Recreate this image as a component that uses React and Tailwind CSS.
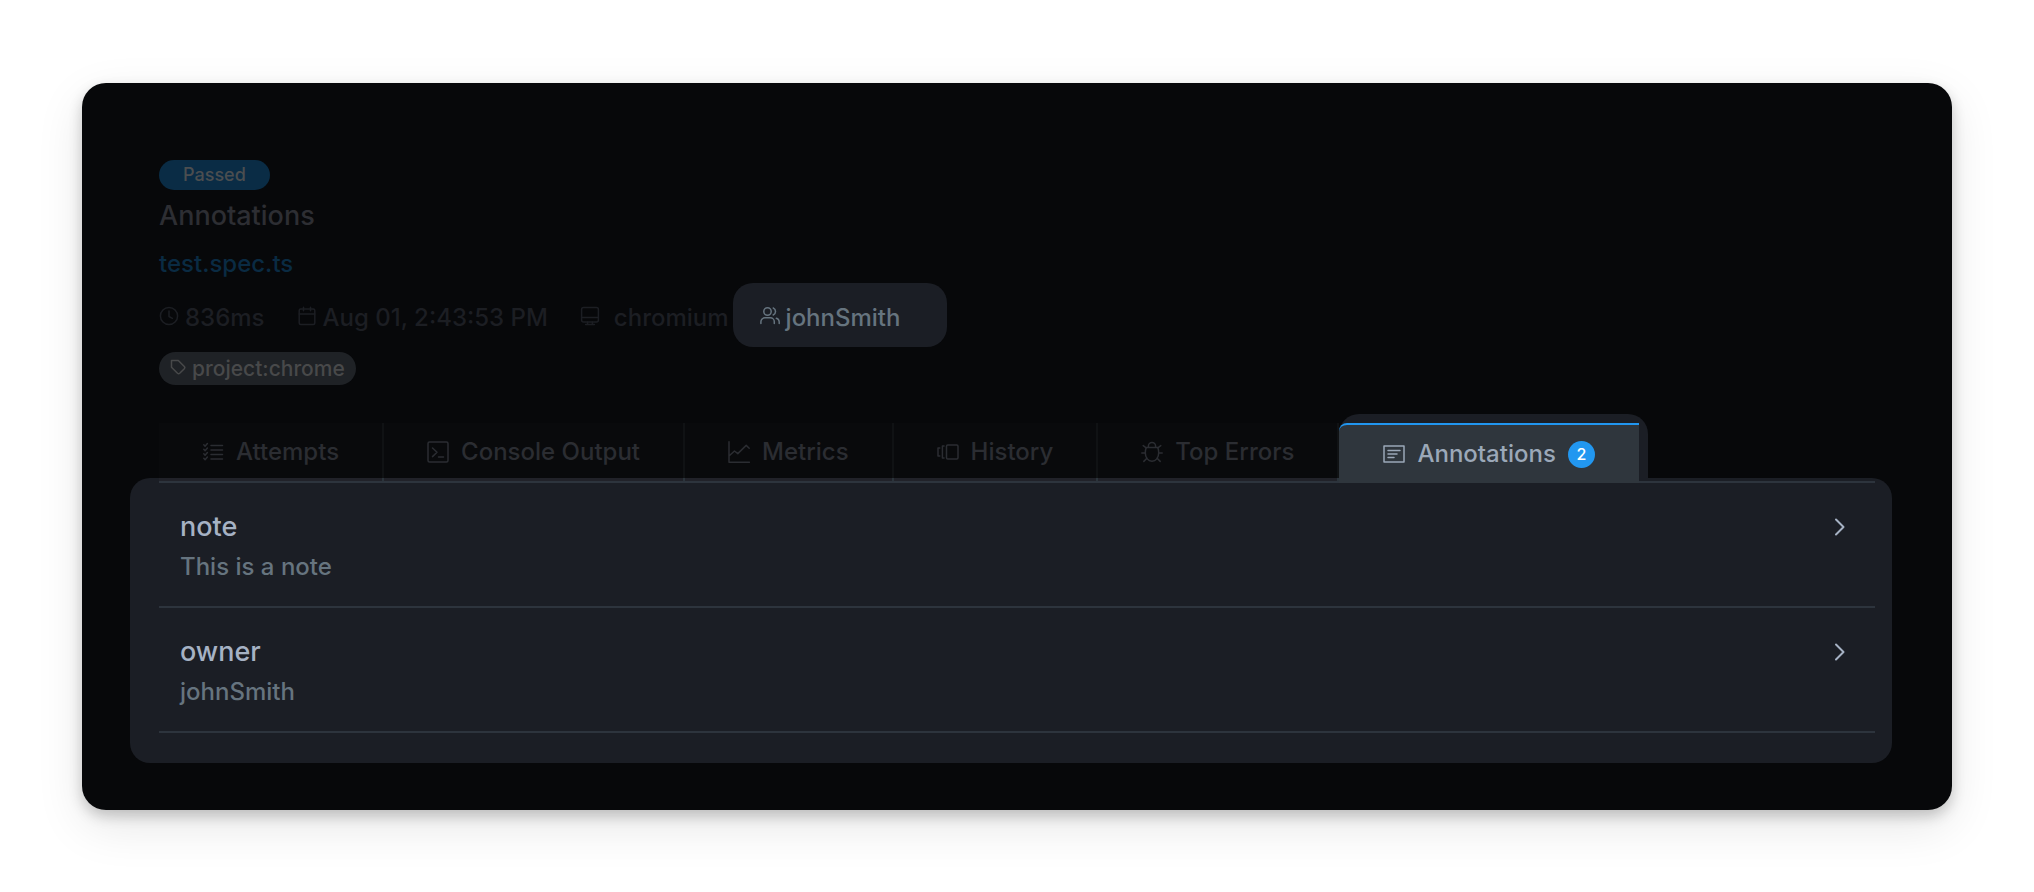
function Icon({ size = 20, children, width = 1.5, className = "" }) {
    return (
        <svg
            width={size}
            height={size}
            viewBox={`0 0 ${size} ${size}`}
            fill="none"
            stroke="currentColor"
            strokeWidth={width}
            strokeLinecap="round"
            strokeLinejoin="round"
            aria-hidden="true"
            className={`shrink-0 ${className}`}
        >
            {children}
        </svg>
    );
}

const ClockIcon = () => (
    <Icon className="mb-1">
        <circle cx="10" cy="10" r="8.6" />
        <path d="M10 5v5.5l3.4 1.8" />
    </Icon>
);

const CalendarIcon = () => (
    <Icon className="mb-1">
        <rect x="2.2" y="3" width="15.6" height="15.4" rx="1.5" />
        <path d="M2.2 8h15.6M6.5 1.2v3.6M13.5 1.2v3.6" />
    </Icon>
);

const BrowserIcon = () => (
    <Icon className="mb-1">
        <rect x="1.6" y="1.6" width="16.8" height="14.4" rx="2" />
        <path d="M1.6 11.6h16.8M7.6 16v2.4M12.4 16v2.4M5.6 18.4h8.8" />
    </Icon>
);

const UsersIcon = () => (
    <Icon className="mb-1">
        <circle cx="7.5" cy="5.5" r="3.7" />
        <path d="M.9 17.4v-1.6a4 4 0 0 1 4-4h5.4a4 4 0 0 1 4 4v1.6M13.2 2a3.8 3.8 0 0 1 0 7M16.4 12.3a4 4 0 0 1 2.8 3.5v1.6" />
    </Icon>
);

const TagIcon = () => (
    <Icon size={16} className="mb-1">
        <path d="M1.5 1.5h6.8l6 6a1.6 1.6 0 0 1 0 2.2l-4.6 4.6a1.6 1.6 0 0 1-2.2 0l-6-6z" />
    </Icon>
);

const ChecksIcon = () => (
    <Icon size={22}>
        <path d="M9 4.5h11.5M9 9h11.5M9 13.5h11.5M9 18h11.5" />
        <path d="M1.8 3.8l1.3 1.4 2.3-2.6M1.8 8.3l1.3 1.4 2.3-2.6M1.8 12.8l1.3 1.4 2.3-2.6M1.8 17.3l1.3 1.4 2.3-2.6" />
    </Icon>
);

const ConsoleIcon = () => (
    <Icon size={22}>
        <rect x="1" y="1" width="20" height="20" rx="1.5" />
        <path d="M5.5 7l4.5 4.3-4.5 4.3M11.5 16h5" />
    </Icon>
);

const MetricsIcon = () => (
    <Icon size={22}>
        <path d="M1 .8v20.4h20.4M1 15l5.5-5 3.3 2.6 8.4-8.2 3 2.8" />
    </Icon>
);

const HistoryIcon = () => (
    <Icon size={22}>
        <rect x="9.5" y="4" width="11.5" height="14" rx="1.2" />
        <path d="M7 5H5.4v12H7M2.8 7H1v8h1.8" />
    </Icon>
);

const BugIcon = () => (
    <Icon size={22}>
        <path d="M5.2 6.4h11.6c.6 1.6.9 3.4.9 5.4 0 5-2.8 8.4-6.7 8.4s-6.7-3.4-6.7-8.4c0-2 .3-3.8.9-5.4zM7.4 6.4V5a3.6 3.6 0 0 1 7.2 0v1.4" />
        <path d="M.8 12h3.5M17.7 12h3.5M2.2 4.6l3 2.2M19.8 4.6l-3 2.2M2.8 20.4l3.1-3.1M19.2 20.4l-3.1-3.1" />
    </Icon>
);

const NoteIcon = () => (
    <Icon size={22}>
        <rect x="1" y="3" width="20" height="16" />
        <path d="M5 7.5h12M5 11h9M5 14.5h6" />
    </Icon>
);

const tabs = [
    { label: "Attempts", icon: ChecksIcon },
    { label: "Console Output", icon: ConsoleIcon },
    { label: "Metrics", icon: MetricsIcon },
    { label: "History", icon: HistoryIcon },
    { label: "Top Errors", icon: BugIcon },
];

const annotations = [
    { type: "note", description: "This is a note" },
    { type: "owner", description: "johnSmith" },
];

function Tab({ label, icon: TabIcon }) {
    return (
        <button
            role="tab"
            aria-selected="false"
            className="relative flex items-center gap-3 border-r-2 border-[#101214] bg-[#090a0c] px-[43px] text-[#2b2d32] after:absolute after:-right-0.5 after:bottom-0 after:left-0 after:h-[3px] after:border-r-2 after:border-[#2b343b] after:bg-[#212229]"
        >
            <TabIcon />
            {label}
        </button>
    );
}

function AnnotationRow({ type, description }) {
    return (
        <li className="border-b-2 border-[#2d343d]">
            <button className="flex w-full items-start justify-between pt-[26px] pr-6 pb-[21px] pl-[21px] text-left">
                <span className="flex flex-col gap-1 leading-9">
                    <span className="text-[27px] text-[#a6b2c4]">{type}</span>
                    <span className="text-[#66747f]">{description}</span>
                </span>
                <Icon size={24} width={2} className="mt-1.5 text-[#a6b2c4]">
                    <path d="M9 4.5l7.5 7.5L9 19.5" />
                </Icon>
            </button>
        </li>
    );
}

export default function App() {
    return (
        <div className="min-h-screen bg-white px-[82px] pt-[83px] pb-20 font-['Inter',sans-serif] text-2xl font-medium">
            <main className="rounded-3xl bg-[#07080a] px-12 pt-[77px] pb-[47px] shadow-[0_6px_14px_rgba(0,0,0,0.2),0_16px_48px_rgba(0,0,0,0.1)]">
                <header className="flex flex-col items-start px-[29px]">
                    <span className="rounded-full bg-[#0a2c45] px-6 text-lg leading-[30px] text-[#4b4e50]">
                        Passed
                    </span>
                    <h1 className="mt-2 text-[27px] leading-9 text-[#2d2e33]">Annotations</h1>
                    <a href="#spec" className="mt-3 leading-9 text-[#0a2b43]">
                        test.spec.ts
                    </a>
                    <div className="mt-px flex h-16 items-stretch text-[#1c1e23]">
                        <span className="flex items-center gap-1.5 pt-1.5">
                            <ClockIcon />
                            836ms
                        </span>
                        <span className="ml-8 flex items-center gap-1.5 pt-1.5">
                            <CalendarIcon />
                            Aug 01, 2:43:53 PM
                        </span>
                        <span className="ml-8 flex items-center gap-3.5 pt-1.5">
                            <BrowserIcon />
                            chromium
                        </span>
                        <span className="ml-1 flex items-center gap-1.5 rounded-[20px] bg-[#1b1e25] pt-1.5 pr-[46px] pl-[27px] text-[#66747f]">
                            <UsersIcon />
                            johnSmith
                        </span>
                    </div>
                    <span className="mt-[5px] flex h-[33px] items-center gap-1.5 rounded-full bg-[#1f2226] px-[11px] text-[21px] text-[#48494a]">
                        <TagIcon />
                        project:chrome
                    </span>
                </header>

                <div role="tablist" className="relative mt-[29px] ml-[29px] flex h-[67px] items-stretch pt-[9px]">
                    {tabs.map((tab) => (
                        <Tab key={tab.label} {...tab} />
                    ))}
                    <div className="-mt-[9px] flex rounded-t-[20px] bg-[#1b1e25] pt-[9px] pr-[9px]">
                        <button
                            role="tab"
                            aria-selected="true"
                            className="z-10 -mb-0.5 flex items-center gap-3 rounded-tl-lg border-t-2 border-[#2196f0] bg-[#2f363d] px-11 text-[#9ba8b8]"
                        >
                            <NoteIcon />
                            Annotations
                            <span className="flex size-[27px] items-center justify-center rounded-full bg-[#2297f0] text-base text-white">
                                2
                            </span>
                        </button>
                    </div>
                </div>

                <section className="-mt-[3px] mr-3 rounded-[20px] bg-[#1b1e25] pt-[3px] pr-[17px] pb-[30px] pl-[29px]">
                    <ul className="border-t-2 border-[#2d343d]">
                        {annotations.map((item) => (
                            <AnnotationRow key={item.type} {...item} />
                        ))}
                    </ul>
                </section>
            </main>
        </div>
    );
}
